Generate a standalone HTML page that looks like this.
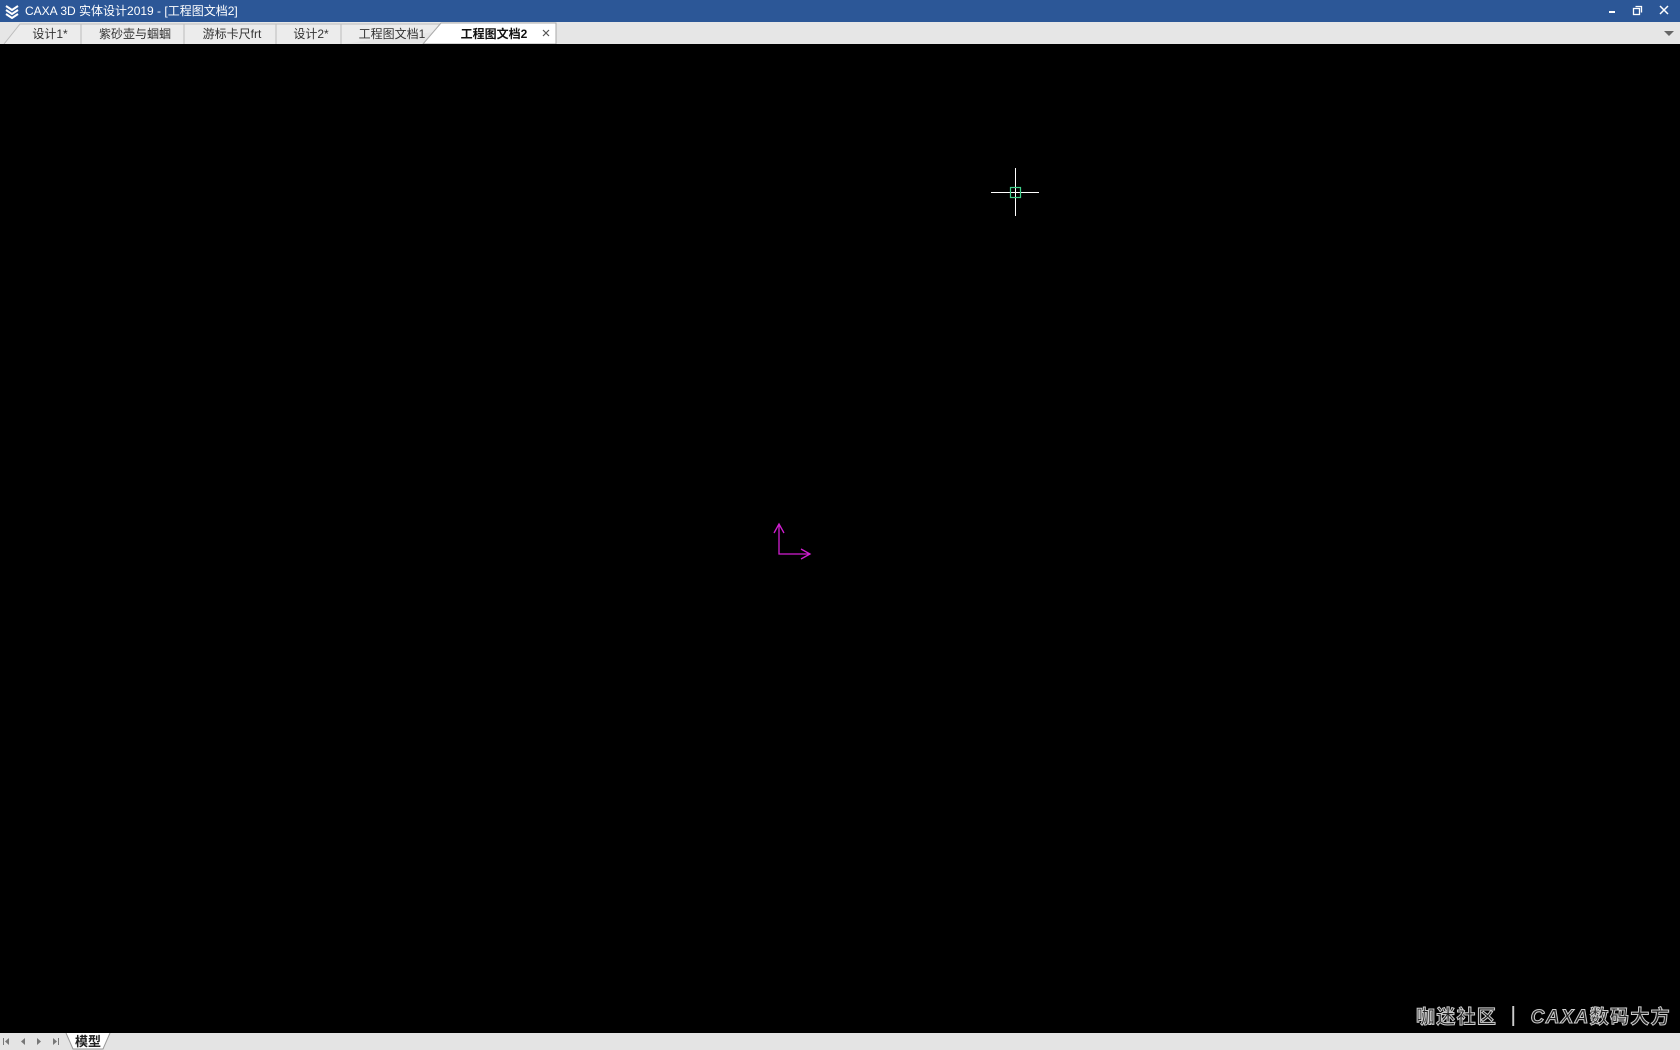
<!DOCTYPE html>
<html><head><meta charset="utf-8">
<style>
*{margin:0;padding:0;box-sizing:border-box}
html,body{width:1680px;height:1050px;overflow:hidden;background:#000;font-family:"Liberation Sans","Noto Sans CJK SC",sans-serif}
#title{position:absolute;left:0;top:0;width:1680px;height:22px;background:#2c5797;color:#fff;font-size:12px;line-height:22px}
#title .t{position:absolute;left:25px;top:0}
#tabs{position:absolute;left:0;top:22px;width:1680px;height:22px;background:#e6e6e6}
#bottom{position:absolute;left:0;top:1033px;width:1680px;height:17px;background:#e4e4e4}
#wm{position:absolute;left:1416px;top:1002px;font-size:19px;font-weight:bold;color:#222;-webkit-text-stroke:1px #ccc;letter-spacing:1.3px;white-space:nowrap}
#wm i{font-style:italic}
</style></head><body>
<div id="title">
<svg style="position:absolute;left:4px;top:3px" width="16" height="16" viewBox="0 0 16 16"><path d="M2 3 L8 7 L14 3 M2 7 L8 11 L14 7 M2 11 L8 15 L14 11" stroke="#fff" stroke-width="2" fill="none"/></svg>
<span class="t">CAXA 3D 实体设计2019 - [工程图文档2]</span>
<svg style="position:absolute;left:1600px;top:0" width="80" height="22">
<rect x="9" y="11" width="6" height="2" fill="#fff"/>
<rect x="33.5" y="8.5" width="6" height="6" fill="none" stroke="#fff" stroke-width="1.3"/>
<path d="M35.5 6.5 H41.5 V12.5" fill="none" stroke="#fff" stroke-width="1.3"/>
<path d="M60 6 L68 14 M68 6 L60 14" stroke="#fff" stroke-width="1.5"/>
</svg>
</div>
<div id="tabs">
<svg width="1680" height="22" style="position:absolute;left:0;top:0" font-family="Liberation Sans, Noto Sans CJK SC, sans-serif" font-size="12">
<path d="M4 22 L20 2 L81 2 L81 22" fill="#ececec" stroke="#bdbdbd"/>
<path d="M81 22 L81 2 L184 2 L184 22" fill="#ececec" stroke="#bdbdbd"/>
<path d="M184 22 L184 2 L276 2 L276 22" fill="#ececec" stroke="#bdbdbd"/>
<path d="M276 22 L276 2 L341 2 L341 22" fill="#ececec" stroke="#bdbdbd"/>
<path d="M341 22 L341 2 L440 2 L434 10" fill="#ececec" stroke="#bdbdbd"/>
<path d="M423 22 L441 1 L556 1 L556 22 Z" fill="#ffffff" stroke="#a9a9a9"/>
<g fill="#333" text-anchor="middle">
<text x="50" y="16">设计1*</text>
<text x="135" y="16">紫砂壶与蝈蝈</text>
<text x="232" y="16">游标卡尺frt</text>
<text x="311" y="16">设计2*</text>
<text x="392" y="16">工程图文档1</text>
<text x="494" y="16" font-weight="bold" fill="#111">工程图文档2</text>
</g>
<path d="M543 8 L549 14 M549 8 L543 14" stroke="#555" stroke-width="1.2"/>
<path d="M1664 9 L1674 9 L1669 14 Z" fill="#666"/>
</svg>
</div>
<svg width="1680" height="1050" style="position:absolute;left:0;top:0;pointer-events:none">
<line x1="1015.5" y1="168" x2="1015.5" y2="216" stroke="#fff" stroke-width="1"/>
<line x1="991" y1="192.5" x2="1039" y2="192.5" stroke="#fff" stroke-width="1"/>
<rect x="1010.5" y="187.5" width="10" height="10" fill="none" stroke="#3fcf8a" stroke-width="1.2"/>
<g stroke="#d21ed2" stroke-width="1.3" fill="none">
<path d="M779 525 L779 554 L810 554"/>
<path d="M774 533 L779 524 L784 533"/>
<path d="M801 549 L810 554 L801 559"/>
</g>
</svg>
<div id="wm">咖迷社区 ｜ <i>CAXA</i>数码大方</div>
<div id="bottom">
<svg width="120" height="17" style="position:absolute;left:0;top:0">
<g fill="#777"><rect x="3" y="5" width="1" height="7"/><path d="M9 5 L5 8.5 L9 12Z"/><path d="M25 5 L21 8.5 L25 12Z"/><path d="M37 5 L41 8.5 L37 12Z"/><path d="M53 5 L57 8.5 L53 12Z"/><rect x="58" y="5" width="1" height="7"/></g>
<path d="M66 0 L73 16 L103 16 L110 0" fill="#fff" stroke="#999"/>
<text x="88" y="13" text-anchor="middle" font-size="13" font-weight="bold" fill="#222" font-family="Liberation Sans, Noto Sans CJK SC, sans-serif">模型</text>
</svg>
</div>
</body></html>
